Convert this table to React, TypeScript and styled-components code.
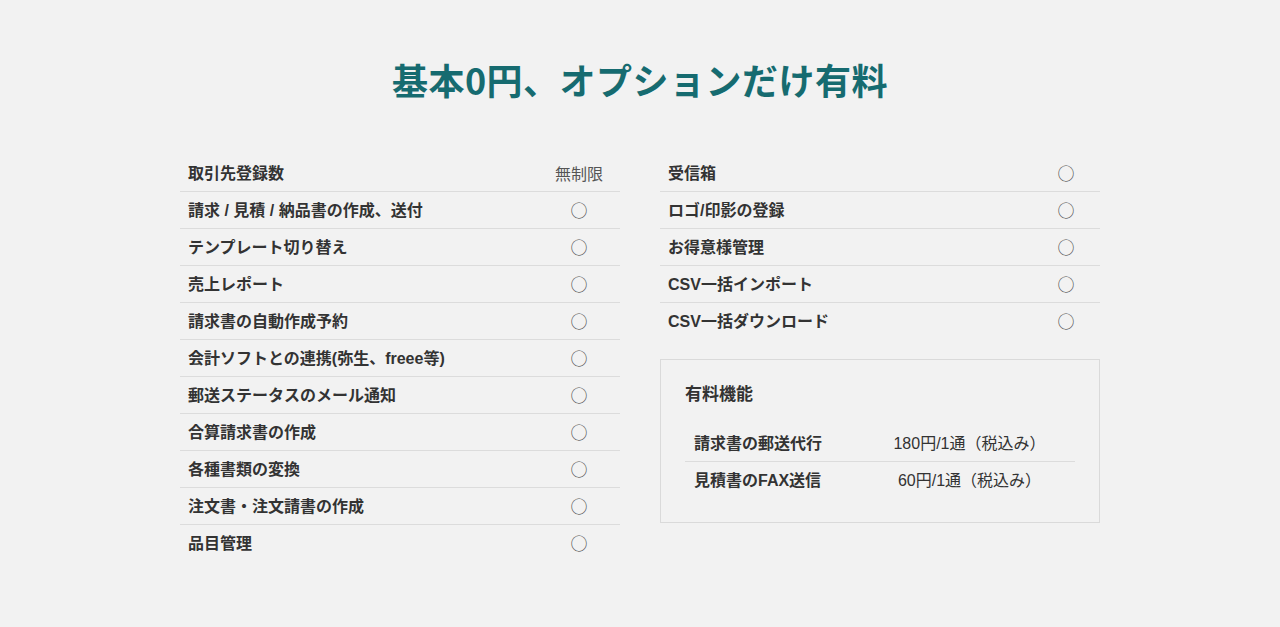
import styled, {createGlobalStyle} from 'styled-components';

const GlobalStyle = createGlobalStyle`
    html, body {
        margin: 0;
        padding: 0;
        background: #f2f2f2;
    }
    body {
        font-family: "Liberation Sans", "Noto Sans CJK JP", sans-serif;
        color: #333;
    }
`;

const Page = styled.main`
    padding: 52px 0 60px;
`;

const Title = styled.h2`
    margin: 0 0 49px;
    font-family: "Noto Sans CJK JP", sans-serif;
    font-size: 36px;
    line-height: 54px;
    font-weight: 700;
    color: #166b70;
    text-align: center;
    letter-spacing: 0.5px;
`;

const Columns = styled.div`
    width: 920px;
    margin: 0 auto;
    display: grid;
    grid-template-columns: 440px 440px;
    column-gap: 40px;
    align-items: start;
`;

const Side = styled.div`
    display: flex;
    flex-direction: column;
    gap: 20px;
`;

const List = styled.ul`
    list-style: none;
    margin: 0;
    padding: 0;
`;

const Row = styled.li`
    display: flex;
    align-items: center;
    padding: 6px 0 6px 8px;
    border-bottom: 1px solid #dcdcdc;
    font-size: 16px;
    line-height: 24px;

    &:last-child {
        border-bottom: none;
    }
`;

// the latin font puts CJK glyphs a pixel high, so nudge the line down
const Label = styled.span`
    flex: 1;
    padding-top: 2px;
    line-height: 22px;
    font-weight: 700;
    color: #333;
`;

const Value = styled.span<{$width: number}>`
    width: ${(props) => props.$width}px;
    text-align: center;
    color: #555;
    font-weight: 400;
    font-family: "Noto Sans CJK JP", sans-serif;
    font-size: ${(props) => (props.children === '○' ? '17px' : '16px')};
`;

const PaidBox = styled.section`
    border: 1px solid #dadada;
    padding: 23px 24px 24px;
`;

const PaidTitle = styled.h3`
    margin: 0 0 18px;
    font-size: 17px;
    line-height: 24px;
    font-weight: 700;
    color: #333;
`;

const PaidRow = styled.div`
    display: grid;
    grid-template-columns: 170px 1fr;
    align-items: center;
    padding: 6px 0 6px 9px;
    border-bottom: 1px solid #dcdcdc;
    font-size: 16px;
    line-height: 24px;

    &:last-child {
        border-bottom: none;
    }
`;

const Price = styled.span`
    padding-top: 2px;
    line-height: 22px;
    text-align: center;
    font-weight: 400;
    color: #333;
`;

const leftItems: [string, string][] = [
    ['取引先登録数', '無制限'],
    ['請求 / 見積 / 納品書の作成、送付', '○'],
    ['テンプレート切り替え', '○'],
    ['売上レポート', '○'],
    ['請求書の自動作成予約', '○'],
    ['会計ソフトとの連携(弥生、freee等)', '○'],
    ['郵送ステータスのメール通知', '○'],
    ['合算請求書の作成', '○'],
    ['各種書類の変換', '○'],
    ['注文書・注文請書の作成', '○'],
    ['品目管理', '○'],
];

const rightItems: [string, string][] = [
    ['受信箱', '○'],
    ['ロゴ/印影の登録', '○'],
    ['お得意様管理', '○'],
    ['CSV一括インポート', '○'],
    ['CSV一括ダウンロード', '○'],
];

const paidItems = [
    {name: '請求書の郵送代行', price: '180円/1通（税込み）'},
    {name: '見積書のFAX送信', price: '60円/1通（税込み）'},
];

const App = () => {
    return (
        <>
            <GlobalStyle />
            <Page>
                <Title>基本0円、オプションだけ有料</Title>
                <Columns>
                    <List>
                        {leftItems.map(([label, value]) => (
                            <Row key={label}>
                                <Label>{label}</Label>
                                <Value $width={82}>{value}</Value>
                            </Row>
                        ))}
                    </List>
                    <Side>
                        <List>
                            {rightItems.map(([label, value]) => (
                                <Row key={label}>
                                    <Label>{label}</Label>
                                    <Value $width={68}>{value}</Value>
                                </Row>
                            ))}
                        </List>
                        <PaidBox>
                            <PaidTitle>有料機能</PaidTitle>
                            {paidItems.map((item) => (
                                <PaidRow key={item.name}>
                                    <Label>{item.name}</Label>
                                    <Price>{item.price}</Price>
                                </PaidRow>
                            ))}
                        </PaidBox>
                    </Side>
                </Columns>
            </Page>
        </>
    );
};

export default App;
